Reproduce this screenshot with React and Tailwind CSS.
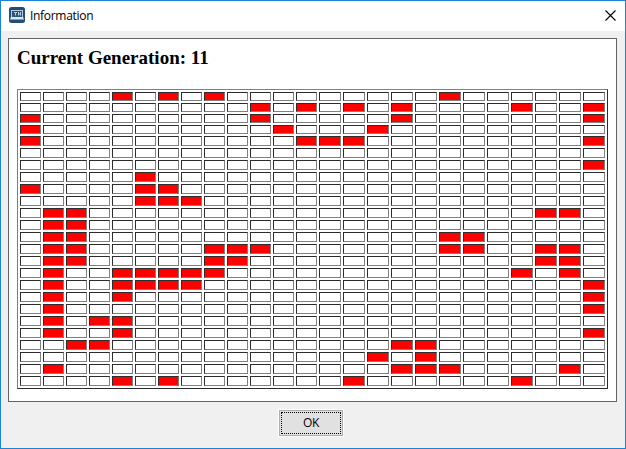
const ROWS = [
  [4, 6, 8, 18],
  [10, 12, 14, 16, 21, 24],
  [0, 10, 16, 24],
  [0, 11, 15],
  [0, 12, 13, 14, 24],
  [],
  [24],
  [5],
  [0, 5, 6],
  [5, 6, 7],
  [1, 2, 22, 23],
  [1, 2],
  [1, 2, 18, 19],
  [1, 2, 8, 9, 10, 18, 19, 22, 23],
  [1, 2, 8, 9, 22, 23],
  [1, 4, 5, 6, 7, 8, 21, 23],
  [1, 4, 5, 6, 7, 24],
  [1, 4, 24],
  [1, 24],
  [1, 3, 4],
  [1, 4, 24],
  [2, 3, 16, 17],
  [15, 17],
  [1, 16, 17, 18, 23],
  [4, 6, 14, 21],
];

const COLUMNS = Array.from({ length: 25 }, (_, i) => i);

function AppIcon() {
  return (
    <svg width="16" height="16" viewBox="0 0 16 16" className="mb-0.5 shrink-0">
      <rect width="16" height="16" rx="2.5" fill="#1f4f78" />
      <path d="M2 3h12v8H2z" fill="#b4c8d9" />
      <path d="M3 4h10v6H3z" fill="#2a557f" />
      <path d="M5 5.5h3M6.5 5.5v3M9.5 5v3.5M9.5 7h2.5M11.5 5v3.5" stroke="#b9cbdc" fill="none" />
      <path d="M2 10h12l1 2.5H1z" fill="#dfe8f0" />
    </svg>
  );
}

function TitleBar() {
  return (
    <header className="flex h-[30px] shrink-0 items-center bg-white pl-2 pr-[9px]">
      <AppIcon />
      <span className="ml-[5px] flex-1 text-[12px] leading-4 tracking-[-0.3px] text-black">
        Information
      </span>
      <svg width="11" height="11" viewBox="0 0 11 11" className="mb-0.5">
        <path d="M.5 .5l10 10M10.5 .5l-10 10" stroke="#000" strokeWidth="1.1" />
      </svg>
    </header>
  );
}

function Grid() {
  return (
    <div className="grid w-[591px] grid-cols-[repeat(13,21px)_repeat(12,22px)] grid-rows-[repeat(4,9px)_repeat(21,10px)] gap-0.5 border border-t-[#808080] border-l-[#808080] border-r-[#2c2c2c] border-b-[#2c2c2c] p-0.5">
      {ROWS.map((alive, row) =>
        COLUMNS.map((col) => (
          <div
            key={`${row}-${col}`}
            className={`border border-t-[#2c2c2c] border-l-[#2c2c2c] border-r-[#808080] border-b-[#808080] ${
              alive.includes(col) ? "bg-[#ff0000]" : "bg-white"
            }`}
          />
        ))
      )}
    </div>
  );
}

export default function App() {
  return (
    <div className="flex h-[449px] w-[626px] flex-col overflow-hidden border border-[#1883d7] bg-[#f0f0f0] font-['Open_Sans','Noto_Sans',sans-serif]">
      <TitleBar />
      <main className="ml-[7px] mt-[7px] h-[364px] w-[609px] shrink-0 border border-[#646464] bg-white pl-2">
        <h2 className="h-[50px] pt-2 font-['Liberation_Serif',serif] text-[19px] leading-[22px] font-bold whitespace-nowrap text-black">
          Current Generation: 11
        </h2>
        <Grid />
      </main>
      <footer className="flex justify-center pt-[7px] pr-1">
        <button className="h-[28px] w-[66px] border border-white bg-[#e1e1e1] text-[12px] tracking-[-0.4px] text-black">
          <span className="flex h-full w-full border border-[#adadad] p-px">
            <span className="flex flex-1 items-center justify-center border border-dotted border-black leading-none">
              OK
            </span>
          </span>
        </button>
      </footer>
    </div>
  );
}
